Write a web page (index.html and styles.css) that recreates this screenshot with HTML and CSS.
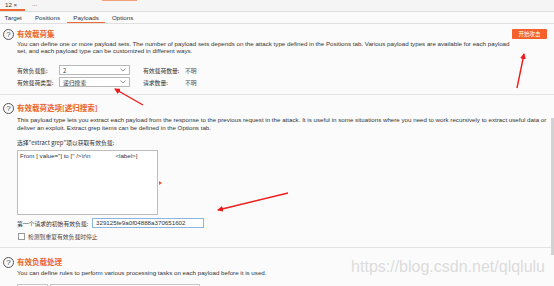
FILE: index.html
```html
<!DOCTYPE html>
<html lang="zh-CN">
<head>
  <meta charset="UTF-8">
  <meta name="viewport" content="width=device-width, initial-scale=1.0">
  <title>Intruder - Payloads</title>
  <link rel="stylesheet" href="styles.css">
</head>
<body>

<div class="topbar">
  <span class="doc-tab active">12 ×</span>
  <span class="doc-tab more">...</span>
  <span class="cut"></span>
</div>

<div class="tabs">
  <span class="tab">Target</span>
  <span class="tab">Positions</span>
  <span class="tab active">Payloads</span>
  <span class="tab">Options</span>
</div>

<div class="section s1">
  <div class="help">?</div>
  <div class="sec-body">
    <div class="sec-head">
      <h2>有效载荷集</h2>
      <button type="button" class="start">开始攻击</button>
    </div>
    <p class="desc">You can define one or more payload sets. The number of payload sets depends on the attack type defined in the Positions tab. Various payload types are available for each payload<br>set, and each payload type can be customized in different ways.</p>
    <div class="params">
      <span class="lbl">有效负载集:</span>
      <div class="select"><span>2</span><svg width="6" height="4" viewBox="0 0 6 4"><polyline points="0.5,0.5 3,3 5.5,0.5" fill="none" stroke="#777" stroke-width="0.8"/></svg></div>
      <span class="lbl right">有效载荷数量:</span>
      <span class="val">不明</span>
      <span class="lbl">有效载荷类型:</span>
      <div class="select"><span>递归搜索</span><svg width="6" height="4" viewBox="0 0 6 4"><polyline points="0.5,0.5 3,3 5.5,0.5" fill="none" stroke="#777" stroke-width="0.8"/></svg></div>
      <span class="lbl right">请求数量:</span>
      <span class="val">不明</span>
    </div>
  </div>
</div>

<div class="section s2">
  <div class="help">?</div>
  <div class="sec-body">
    <div class="sec-head">
      <h2>有效载荷选项[递归搜索]</h2>
    </div>
    <p class="desc">This payload type lets you extract each payload from the response to the previous request in the attack. It is useful in some situations where you need to work recursively to extract useful data or<br>deliver an exploit. Extract grep items can be defined in the Options tab.</p>
    <div class="pick">选择"extract grep"项以获取有效负载:</div>
    <div class="list">
      <div class="item">From [ value="] to [" /&gt;\r\n<span class="tail">&lt;label&gt;]</span></div>
    </div>
    <div class="initial">
      <span class="lbl">第一个请求的初始有效负载:</span>
      <div class="input">329125fe9a0f04888a370651602</div>
    </div>
    <label class="check"><span class="box"></span>检测到重复有效负载时停止</label>
  </div>
</div>

<div class="section s3">
  <div class="help">?</div>
  <div class="sec-body">
    <div class="sec-head">
      <h2>有效负载处理</h2>
    </div>
    <p class="desc">You can define rules to perform various processing tasks on each payload before it is used.</p>
    <div class="rule-bar">
      <span class="rule-btn"></span>
      <span class="rule-table"></span>
    </div>
  </div>
</div>

<!-- 截图上的标注 -->
<svg class="marks" width="554" height="286" viewBox="0 0 554 286">
  <defs>
    <marker id="head" markerWidth="6" markerHeight="6" refX="5" refY="3" orient="auto" markerUnits="userSpaceOnUse">
      <polygon points="0,0 6,3 0,6" fill="#ee1c1c"/>
    </marker>
  </defs>
  <line x1="143" y1="105" x2="115" y2="89" stroke="#ee1c1c" stroke-width="1.4" marker-end="url(#head)"/>
  <line x1="288" y1="193" x2="218" y2="210" stroke="#ee1c1c" stroke-width="1.4" marker-end="url(#head)"/>
  <line x1="517" y1="88" x2="524" y2="54" stroke="#ee1c1c" stroke-width="1.4" marker-end="url(#head)"/>
  <polygon points="159,181 162,183 159,185" fill="#f0502a"/>
</svg>

<div class="scroll-thumb"></div>
<div class="watermark">https://blog.csdn.net/qlqlulu</div>

</body>
</html>
```

FILE: styles.css
```css
* {
    box-sizing: border-box;
}

body {
    margin: 0;
    width: 554px;
    height: 286px;
    overflow: hidden;
    position: relative;
    background-color: #fbfbfb;
    font-family: "Liberation Sans", "Noto Sans CJK SC", sans-serif;
    font-size: 6.2px;
    color: #333;
}

.topbar {
    display: flex;
    height: 12px;
    background-color: #f5f5f5;
    border-bottom: 1px solid #e0e0e0;
}

.doc-tab {
    height: 11px;
    line-height: 10px;
    padding-left: 5px;
}

.doc-tab.active {
    width: 25px;
    border-bottom: 2px solid #f06a30;
}

.doc-tab.more {
    margin-left: 2px;
    width: 15px;
    line-height: 7px;
}

.cut {
    margin-left: 60px;
    width: 35px;
    height: 1px;
    background-color: #f4a27a;
}

.tabs {
    display: flex;
    height: 12px;
    margin-left: -2px;
    border-bottom: 1px solid #e0e0e0;
}

.tab {
    padding: 0 6.6px;
    line-height: 11px;
    height: 11px;
}

.tab.active {
    border-bottom: 1px solid #f06a30;
}

.section {
    display: flex;
    padding: 0 7px 7px 3px;
    border-bottom: 1px solid #e4e4e4;
}

.s1 {
    padding-top: 5px;
}

.s2 {
    padding-top: 8px;
}

.s3 {
    padding-top: 9px;
    border-bottom: none;
}

.help {
    flex: none;
    width: 11px;
    height: 11px;
    margin-right: 3px;
    border: 1px solid #555;
    border-radius: 50%;
    font-size: 8px;
    line-height: 9px;
    text-align: center;
    color: #444;
}

.sec-body {
    flex: 1;
}

.sec-head {
    display: flex;
    justify-content: space-between;
    align-items: center;
    height: 10px;
}

h2 {
    margin: 0;
    font-family: "Noto Sans CJK SC", sans-serif;
    font-size: 7.5px;
    line-height: 10px;
    font-weight: bold;
    color: #ea642c;
}

.start {
    width: 35px;
    height: 10px;
    padding: 0;
    border: none;
    border-radius: 1px;
    background-color: #f6602a;
    color: #fff;
    font-family: "Noto Sans CJK SC", sans-serif;
    font-size: 5.5px;
    line-height: 10px;
}

.desc {
    margin: 0.5px 0 0;
    line-height: 7.5px;
    white-space: nowrap;
}

.s2 .desc {
    margin-top: 3.25px;
}

.s3 .desc {
    margin-top: 1.5px;
}

.lbl,
.val,
.pick,
.check,
.select {
    font-family: "Noto Sans CJK SC", sans-serif;
    font-size: 5.8px;
}

.params {
    display: grid;
    grid-template-columns: 42px 71px 55px auto;
    grid-auto-rows: 10px;
    row-gap: 2px;
    margin-top: 10.5px;
    align-items: center;
}

.lbl.right {
    padding-left: 13px;
}

.val {
    color: #555;
}

.select {
    display: flex;
    align-items: center;
    justify-content: space-between;
    height: 10px;
    padding: 0 3px 0 3px;
    border: 1px solid #b8b8b8;
    background-color: #fff;
}

.pick {
    margin-top: 8px;
    line-height: 8px;
}

.list {
    width: 141px;
    height: 65px;
    margin-top: 2.75px;
    padding: 1px 2px;
    border: 1px solid #bdbdbd;
    background-color: #fff;
}

.item {
    line-height: 8px;
    white-space: pre;
}

.tail {
    margin-left: 25px;
}

.initial {
    display: flex;
    align-items: center;
    margin-top: 3px;
    height: 10px;
}

.initial .lbl {
    width: 75px;
}

.input {
    width: 112px;
    height: 10px;
    padding-left: 3px;
    border: 1px solid #8db5e2;
    background-color: #fff;
    line-height: 8px;
}

.check {
    display: flex;
    align-items: center;
    height: 8px;
    margin-top: 4px;
    color: #444;
}

.box {
    width: 7px;
    height: 7px;
    margin: 0 3px 0 1px;
    border: 1px solid #999;
    background-color: #fff;
}

.rule-bar {
    display: flex;
    gap: 2px;
    margin-top: 8px;
}

.rule-btn,
.rule-table {
    height: 12px;
    border: 1px solid #c4c4c4;
    background-color: #fff;
}

.rule-btn {
    width: 31px;
}

.rule-table {
    width: 150px;
}

.marks {
    position: absolute;
    top: 0;
    left: 0;
    pointer-events: none;
}

.scroll-thumb {
    position: absolute;
    top: 118px;
    right: 0;
    width: 3px;
    height: 137px;
    background-color: #d2d2d2;
}

.watermark {
    position: absolute;
    top: 258px;
    right: 9px;
    font-family: "Liberation Sans", sans-serif;
    font-size: 16px;
    color: #dcdcdc;
    pointer-events: none;
}
```
